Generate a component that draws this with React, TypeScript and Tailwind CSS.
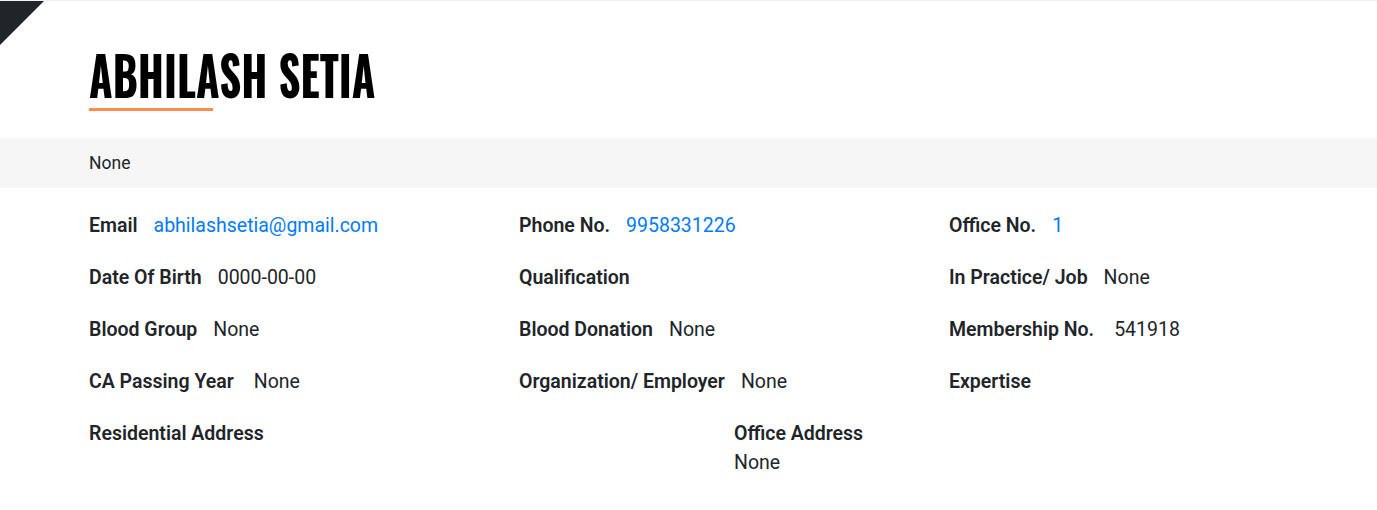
import React from "react";

type Field = { label: string; value?: string; link?: boolean; gap?: string };

const rows: Field[][] = [
  [
    { label: "Email", value: "abhilashsetia@gmail.com", link: true, gap: "mr-4" },
    { label: "Phone No.", value: "9958331226", link: true, gap: "mr-4" },
    { label: "Office No.", value: "1", link: true, gap: "mr-4" },
  ],
  [
    { label: "Date Of Birth", value: "0000-00-00", gap: "mr-4" },
    { label: "Qualification" },
    { label: "In Practice/ Job", value: "None", gap: "mr-4" },
  ],
  [
    { label: "Blood Group", value: "None", gap: "mr-4" },
    { label: "Blood Donation", value: "None", gap: "mr-4" },
    { label: "Membership No.", value: "541918", gap: "mr-5" },
  ],
  [
    { label: "CA Passing Year", value: "None", gap: "mr-5" },
    { label: "Organization/ Employer", value: "None", gap: "mr-4" },
    { label: "Expertise" },
  ],
];

export default function App() {
  return (
    <div className="relative min-h-[510px] bg-white text-[#212529] font-['Roboto',sans-serif] border-t border-[#eef1f6]">
      <div className="absolute left-0 top-0 w-0 h-0 border-t-[44px] border-r-[44px] border-t-[#212529] border-r-transparent" />

      <div className="px-[89px] pt-[42px]">
        <h1 className="font-['Oswald','Liberation_Sans_Narrow','DejaVu_Sans_Condensed',sans-serif] font-bold text-[55px] leading-[60px] uppercase text-black origin-left scale-x-[0.78] whitespace-nowrap">
          Abhilash Setia
        </h1>
        <div className="mt-[5px] h-[3px] w-[124px] bg-[#ff8c4f]" />
      </div>

      <div className="mt-[27px] h-[50px] bg-[#f6f6f6] px-[89px] flex items-center text-[17.5px]">
        None
      </div>

      <div className="px-[89px] pt-[23px] text-[19.5px] leading-[29px]">
        <div className="flex flex-col gap-[23px]">
          {rows.map((row, i) => (
            <div key={i} className="grid grid-cols-[430px_430px_1fr]">
              {row.map((f) => (
                <div key={f.label} className="flex whitespace-nowrap">
                  <span className={`font-semibold ${f.gap ?? ""}`}>{f.label}</span>
                  {f.value && (
                    <span className={f.link ? "text-[#007bff]" : ""}>{f.value}</span>
                  )}
                </div>
              ))}
            </div>
          ))}
          <div className="grid grid-cols-[645px_1fr]">
            <div className="font-semibold">Residential Address</div>
            <div>
              <div className="font-semibold">Office Address</div>
              <div>None</div>
            </div>
          </div>
        </div>
      </div>
    </div>
  );
}
